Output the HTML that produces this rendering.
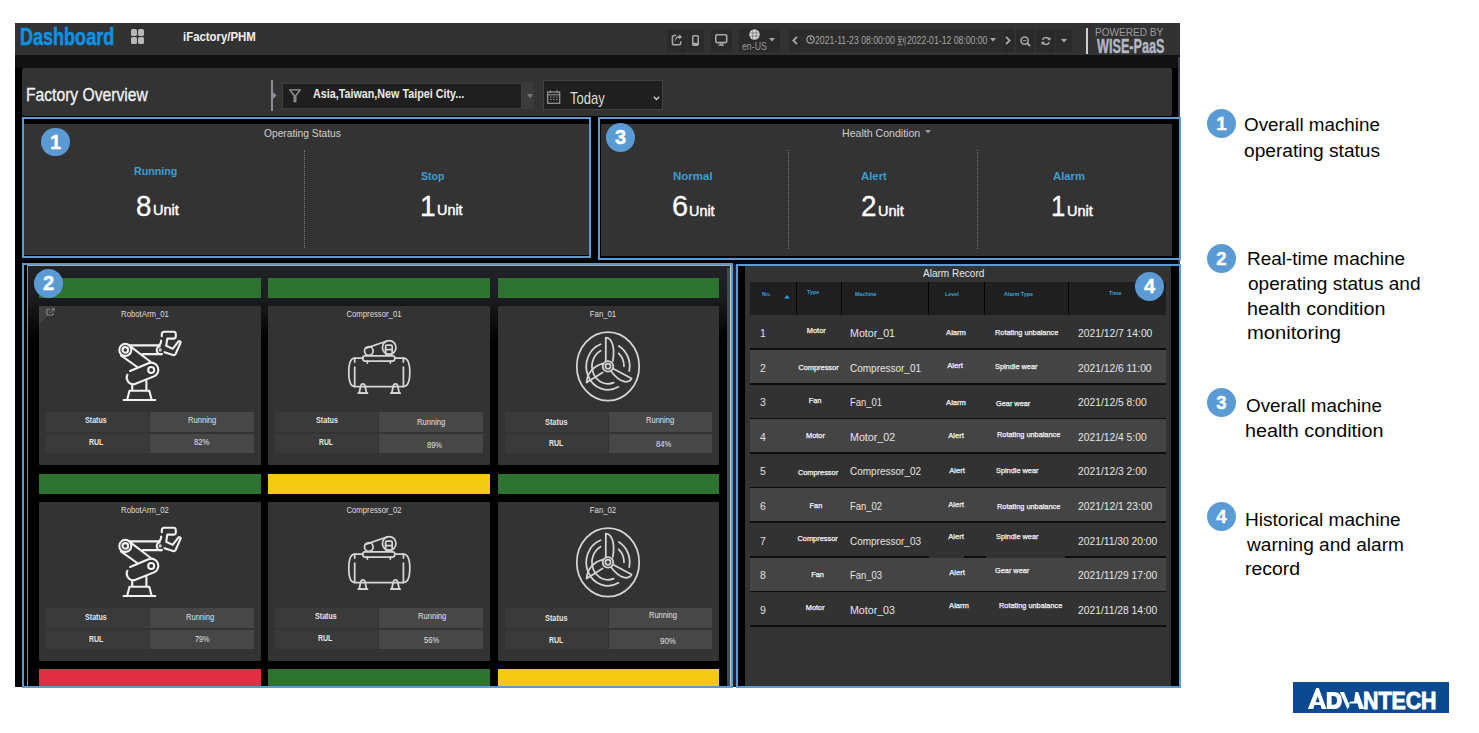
<!DOCTYPE html><html><head><meta charset="utf-8"><style>
html,body{margin:0;padding:0;background:#fff;width:1479px;height:733px;overflow:hidden;position:relative;font-family:"Liberation Sans",sans-serif}
.t{position:absolute;white-space:nowrap}
.badge{position:absolute;border-radius:50%;background:#5b9bd5;color:#fff;text-align:center;font-weight:700}
.badge span{display:block;-webkit-text-stroke:0.4px #fff}
svg{position:absolute;overflow:visible}
</style></head><body>
<div style="position:absolute;left:15px;top:23px;width:1165px;height:664px;background:#000;"></div>
<div style="position:absolute;left:15px;top:23px;width:1165px;height:32px;background:#323232;"></div>
<div style="position:absolute;left:15px;top:55px;width:1165px;height:13px;background:#111112;"></div>
<div style="position:absolute;left:1178px;top:57px;width:2px;height:61px;background:#3c3e58;"></div>
<div style="position:absolute;left:1178px;top:259px;width:2px;height:6px;background:#3c3e58;"></div>
<div class="t" style="left:19.73px;top:25.00px;font-size:24px;line-height:24px;font-weight:700;color:#0b92e2;transform:scaleX(0.7515);transform-origin:0 0;-webkit-text-stroke:0.6px #0b92e2;">Dashboard</div>
<div style="position:absolute;left:131px;top:29.2px;width:6.4px;height:6.9px;background:#b8b8b8;border-radius:1.6px"></div>
<div style="position:absolute;left:138.1px;top:29.2px;width:6.4px;height:6.9px;background:#b8b8b8;border-radius:1.6px"></div>
<div style="position:absolute;left:131px;top:37px;width:6.4px;height:6.9px;background:#b8b8b8;border-radius:1.6px"></div>
<div style="position:absolute;left:138.1px;top:37px;width:6.4px;height:6.9px;background:#b8b8b8;border-radius:1.6px"></div>
<div class="t" style="left:182.90px;top:31.00px;font-size:12.2px;line-height:12.2px;font-weight:700;color:#f2f2f2;transform:scaleX(0.9351);transform-origin:0 0;">iFactory/PHM</div>
<div style="position:absolute;left:667px;top:29px;width:20px;height:23px;background:#2a2a2a;"></div>
<div style="position:absolute;left:688px;top:29px;width:15.5px;height:23px;background:#2a2a2a;"></div>
<div style="position:absolute;left:711px;top:29px;width:21px;height:23px;background:#2a2a2a;"></div>
<div style="position:absolute;left:739px;top:29px;width:41px;height:23px;background:#2a2a2a;"></div>
<div style="position:absolute;left:789px;top:29px;width:12px;height:23px;background:#2a2a2a;"></div>
<div style="position:absolute;left:801px;top:29px;width:201px;height:23px;background:#2c2c2c;"></div>
<div style="position:absolute;left:1003px;top:29px;width:11px;height:23px;background:#2a2a2a;"></div>
<div style="position:absolute;left:1016px;top:29px;width:18px;height:23px;background:#2a2a2a;"></div>
<div style="position:absolute;left:1036px;top:29px;width:19px;height:23px;background:#2a2a2a;"></div>
<div style="position:absolute;left:1055.5px;top:29px;width:16px;height:23px;background:#2a2a2a;"></div>
<svg style="left:671px;top:34px" width="12" height="12" viewBox="0 0 12 12"><path d="M5.2 1.6H3.2Q1.4 1.6 1.4 3.4V8.9Q1.4 10.7 3.2 10.7H7.9Q9.7 10.7 9.7 8.9V7.2" fill="none" stroke="#a8a8a8" stroke-width="1.5"/><path d="M3.8 9C4 5.5 6 3.8 8.2 3.8V5.6L11 2.9L8.2 0.2V2C5.5 2 3.6 4.5 3.8 9Z" fill="#a8a8a8"/></svg>
<svg style="left:692px;top:34.5px" width="7" height="11" viewBox="0 0 7 11"><rect x="0.75" y="0.75" width="5.5" height="9.5" rx="1" fill="none" stroke="#a8a8a8" stroke-width="1.5"/><rect x="0.75" y="7.8" width="5.5" height="2.4" fill="#a8a8a8"/></svg>
<svg style="left:715px;top:34px" width="12.5" height="12" viewBox="0 0 12.5 12"><rect x="0.8" y="0.8" width="10.9" height="7.8" rx="1" fill="none" stroke="#a8a8a8" stroke-width="1.6"/><rect x="4.5" y="9.5" width="3.5" height="1.3" fill="#a8a8a8"/><rect x="3.5" y="10.6" width="5.5" height="1.2" fill="#a8a8a8"/></svg>
<svg style="left:749px;top:29px" width="11" height="11" viewBox="0 0 11 11"><circle cx="5.5" cy="5.5" r="5.2" fill="#dcdcdc"/><path d="M0.5 4H10.5M0.5 7H10.5M3.8 0.5V10.5M7.2 0.5V10.5" stroke="#555" stroke-width="0.6"/></svg>
<div class="t" style="left:741.55px;top:41.00px;font-size:10.6px;line-height:10.6px;font-weight:400;color:#9a9a9a;transform:scaleX(0.8268);transform-origin:0 0;">en-US</div>
<svg style="left:769px;top:38px" width="6" height="4" viewBox="0 0 6 4"><path d="M0 0H6L3 3.5Z" fill="#a8a8a8"/></svg>
<svg style="left:792px;top:36px" width="6" height="9" viewBox="0 0 6 9"><path d="M5 0.8L1.3 4.5L5 8.2" fill="none" stroke="#a8a8a8" stroke-width="1.8"/></svg>
<svg style="left:805.5px;top:35px" width="9" height="9" viewBox="0 0 9 9"><circle cx="4.5" cy="4.5" r="3.7" fill="none" stroke="#a8a8a8" stroke-width="1.2"/><path d="M4.5 2.3V4.8H6" fill="none" stroke="#a8a8a8" stroke-width="1"/></svg>
<div class="t" style="left:815.37px;top:35.00px;font-size:11.3px;line-height:11.3px;font-weight:400;color:#a5a5a5;transform:scaleX(0.7681);transform-origin:0 0;">2021-11-23 08:00:00</div>
<div class="t" style="left:907.17px;top:35.00px;font-size:11.3px;line-height:11.3px;font-weight:400;color:#a5a5a5;transform:scaleX(0.7657);transform-origin:0 0;">2022-01-12 08:00:00</div>
<svg style="left:896.9px;top:35.6px" width="9" height="10" viewBox="0 0 9 10"><g fill="none" stroke="#a0a0a0" stroke-width="0.8"><path d="M0.5 0.7H5.4M3 0.9L1.1 3.6L5.2 3.3M4.1 2.3L5.2 3.4M1 5.6H4.8M2.9 3.9V8.7M0.2 8.8H5.6M6.4 1.6V6.6M8.1 0.4V8.8Q8.1 9.4 7.3 9.3"/></g></svg>
<svg style="left:990px;top:38px" width="6" height="4" viewBox="0 0 6 4"><path d="M0 0H6L3 3.5Z" fill="#a8a8a8"/></svg>
<svg style="left:1005px;top:36px" width="6" height="9" viewBox="0 0 6 9"><path d="M1 0.8L4.7 4.5L1 8.2" fill="none" stroke="#a8a8a8" stroke-width="1.8"/></svg>
<svg style="left:1020px;top:36px" width="11" height="11" viewBox="0 0 11 11"><circle cx="4.6" cy="4.6" r="3.6" fill="none" stroke="#a8a8a8" stroke-width="1.6"/><path d="M7.2 7.2L10.2 10.2" stroke="#a8a8a8" stroke-width="1.8"/><path d="M3 4.6H6.2" stroke="#a8a8a8" stroke-width="1"/></svg>
<svg style="left:1040.5px;top:35.5px" width="10" height="10" viewBox="0 0 10 10"><path d="M8.3 3.5A3.8 3.8 0 0 0 1.5 3.8M1.7 6.5A3.8 3.8 0 0 0 8.5 6.2" fill="none" stroke="#a8a8a8" stroke-width="1.6"/><path d="M9.5 0.8V4.2H6.2Z" fill="#a8a8a8"/><path d="M0.5 9.2V5.8H3.8Z" fill="#a8a8a8"/></svg>
<svg style="left:1060.5px;top:39px" width="6" height="4" viewBox="0 0 6 4"><path d="M0 0H6L3 3.5Z" fill="#a8a8a8"/></svg>
<div style="position:absolute;left:1086px;top:28px;width:2.2px;height:25.5px;background:#cfcfcf;"></div>
<div class="t" style="left:1095.19px;top:27.00px;font-size:11.5px;line-height:11.5px;font-weight:400;color:#9c9c9c;transform:scaleX(0.8754);transform-origin:0 0;">POWERED BY</div>
<div class="t" style="left:1096.60px;top:37.00px;font-size:19.6px;line-height:19.6px;font-weight:700;color:#b3b7c6;transform:scaleX(0.6459);transform-origin:0 0;-webkit-text-stroke:0.4px #b3b7c6;">WISE-PaaS</div>
<div style="position:absolute;left:22px;top:68px;width:1149.5px;height:47.7px;background:#333;border-radius:2px"></div>
<div class="t" style="left:26.25px;top:86.00px;font-size:18.6px;line-height:18.6px;font-weight:400;color:#f5f5f5;transform:scaleX(0.8414);transform-origin:0 0;-webkit-text-stroke:0.3px #f5f5f5;">Factory Overview</div>
<div style="position:absolute;left:271px;top:80px;width:1.5px;height:31px;background:#8a8e96;"></div>
<svg style="left:272px;top:91px" width="5" height="9" viewBox="0 0 5 9"><path d="M0 0L4.5 4.5L0 9Z" fill="#8a8e96"/></svg>
<div style="position:absolute;left:281.5px;top:82.5px;width:240.5px;height:26.5px;background:#1f1f1f;box-sizing:border-box;border:1px solid #3e3e3e"></div>
<div style="position:absolute;left:521.8px;top:82px;width:12.6px;height:27.4px;background:#3b3b3b;"></div>
<svg style="left:526.5px;top:94px" width="6" height="5" viewBox="0 0 6 5"><path d="M0 0H6L3 4.5Z" fill="#777"/></svg>
<svg style="left:289px;top:88.5px" width="12" height="13" viewBox="0 0 12 13"><path d="M0.7 0.8H11.3L6.8 6.5V12.5H5.2V6.5Z" fill="none" stroke="#9a9a9a" stroke-width="1.3" stroke-linejoin="round"/></svg>
<div class="t" style="left:312.53px;top:88.00px;font-size:12px;line-height:12px;font-weight:700;color:#ececec;transform:scaleX(0.8963);transform-origin:0 0;">Asia,Taiwan,New Taipei City...</div>
<div style="position:absolute;left:542.6px;top:80px;width:120px;height:30px;background:#1f1f1f;box-sizing:border-box;border:1px solid #424242"></div>
<svg style="left:547px;top:90px" width="13.5" height="14" viewBox="0 0 13.5 14"><rect x="0.7" y="2" width="12" height="11.3" fill="none" stroke="#9a9a9a" stroke-width="1.2"/><path d="M0.7 4.8H12.7" stroke="#9a9a9a" stroke-width="1"/><path d="M3.5 0.5V3M10 0.5V3" stroke="#9a9a9a" stroke-width="1.2"/><path d="M3 7H4.5M6 7H7.5M9 7H10.5M3 9.5H4.5M6 9.5H7.5M9 9.5H10.5" stroke="#9a9a9a" stroke-width="1.2"/></svg>
<div class="t" style="left:569.54px;top:90.00px;font-size:16.2px;line-height:16.2px;font-weight:400;color:#dedede;transform:scaleX(0.8036);transform-origin:0 0;">Today</div>
<svg style="left:652.5px;top:95.5px" width="7" height="5" viewBox="0 0 7 5"><path d="M0.8 0.8L3.5 3.5L6.2 0.8" fill="none" stroke="#cfcfcf" stroke-width="1.4"/></svg>
<div style="position:absolute;left:24px;top:123.5px;width:565px;height:131.5px;background:#333;"></div>
<div style="position:absolute;left:22px;top:117px;width:569px;height:141px;box-sizing:border-box;border:2px solid #5b9bd5"></div>
<div class="t" style="left:263.94px;top:128.00px;font-size:11.5px;line-height:11.5px;font-weight:400;color:#d0d0d0;transform:scaleX(0.8912);transform-origin:0 0;">Operating Status</div>
<div style="position:absolute;left:304px;top:150px;width:0;height:98px;border-left:1px dotted #777"></div>
<div class="t" style="left:134.10px;top:166.00px;font-size:11.5px;line-height:11.5px;font-weight:700;color:#38a0d2;transform:scaleX(0.9305);transform-origin:0 0;">Running</div>
<div class="t" style="left:136.15px;top:191.00px;font-size:30.2px;line-height:30.2px;font-weight:400;color:#fff;transform:scaleX(0.9229);transform-origin:0 0;-webkit-text-stroke:0.3px #fff;">8</div>
<div class="t" style="left:152.51px;top:203.00px;font-size:14.5px;line-height:14.5px;font-weight:400;color:#fff;transform:scaleX(1.0009);transform-origin:0 0;-webkit-text-stroke:0.45px #fff;">Unit</div>
<div class="t" style="left:421.38px;top:171.00px;font-size:11.8px;line-height:11.8px;font-weight:700;color:#38a0d2;transform:scaleX(0.8948);transform-origin:0 0;">Stop</div>
<div class="t" style="left:419.58px;top:191.00px;font-size:30.2px;line-height:30.2px;font-weight:400;color:#fff;transform:scaleX(0.9363);transform-origin:0 0;-webkit-text-stroke:0.3px #fff;">1</div>
<div class="t" style="left:436.92px;top:203.00px;font-size:14.5px;line-height:14.5px;font-weight:400;color:#fff;transform:scaleX(0.9928);transform-origin:0 0;-webkit-text-stroke:0.45px #fff;">Unit</div>
<div class="badge" style="left:41.1px;top:127.5px;width:28.8px;height:28.8px;"><span style="font-size:20px;line-height:28.8px">1</span></div>
<div style="position:absolute;left:600.5px;top:123.5px;width:571px;height:132.3px;background:#333;"></div>
<div style="position:absolute;left:598px;top:117px;width:583px;height:143px;box-sizing:border-box;border:2px solid #5b9bd5"></div>
<div class="t" style="left:841.55px;top:127.00px;font-size:11.6px;line-height:11.6px;font-weight:400;color:#d0d0d0;transform:scaleX(0.9120);transform-origin:0 0;">Health Condition</div>
<svg style="left:924.5px;top:130px" width="6" height="4" viewBox="0 0 6 4"><path d="M0 0H6L3 3.5Z" fill="#999"/></svg>
<div style="position:absolute;left:788px;top:150px;width:0;height:99px;border-left:1px dotted #777"></div>
<div style="position:absolute;left:977px;top:150px;width:0;height:99px;border-left:1px dotted #777"></div>
<div class="t" style="left:673.25px;top:171.00px;font-size:11.3px;line-height:11.3px;font-weight:700;color:#38a0d2;transform:scaleX(1.0198);transform-origin:0 0;">Normal</div>
<div class="t" style="left:671.55px;top:191.00px;font-size:30.2px;line-height:30.2px;font-weight:400;color:#fff;transform:scaleX(0.9613);transform-origin:0 0;-webkit-text-stroke:0.3px #fff;">6</div>
<div class="t" style="left:688.92px;top:204.00px;font-size:14.5px;line-height:14.5px;font-weight:400;color:#fff;transform:scaleX(0.9928);transform-origin:0 0;-webkit-text-stroke:0.45px #fff;">Unit</div>
<div class="t" style="left:861.12px;top:171.00px;font-size:11.3px;line-height:11.3px;font-weight:700;color:#38a0d2;transform:scaleX(1.0035);transform-origin:0 0;">Alert</div>
<div class="t" style="left:861.00px;top:191.00px;font-size:30.2px;line-height:30.2px;font-weight:400;color:#fff;transform:scaleX(0.9242);transform-origin:0 0;-webkit-text-stroke:0.3px #fff;">2</div>
<div class="t" style="left:878.11px;top:204.00px;font-size:14.5px;line-height:14.5px;font-weight:400;color:#fff;transform:scaleX(1.0009);transform-origin:0 0;-webkit-text-stroke:0.45px #fff;">Unit</div>
<div class="t" style="left:1052.72px;top:171.00px;font-size:11.3px;line-height:11.3px;font-weight:700;color:#38a0d2;transform:scaleX(0.9976);transform-origin:0 0;">Alarm</div>
<div class="t" style="left:1050.77px;top:191.00px;font-size:30.2px;line-height:30.2px;font-weight:400;color:#fff;transform:scaleX(0.8526);transform-origin:0 0;-webkit-text-stroke:0.3px #fff;">1</div>
<div class="t" style="left:1066.91px;top:204.00px;font-size:14.5px;line-height:14.5px;font-weight:400;color:#fff;transform:scaleX(1.0009);transform-origin:0 0;-webkit-text-stroke:0.45px #fff;">Unit</div>
<div class="badge" style="left:606.0px;top:123.0px;width:29px;height:29px;"><span style="font-size:20px;line-height:29px">3</span></div>
<div style="position:absolute;left:27px;top:265.5px;width:704px;height:421px;background:linear-gradient(#222326 0px,#1c1d20 30px,#000 75px);"></div>
<div style="position:absolute;left:27px;top:265.5px;width:1px;height:421px;background:#8c8c8c;"></div>
<div style="position:absolute;left:27px;top:265px;width:704px;height:1px;background:#a8a8a8;"></div>
<div style="position:absolute;left:733.2px;top:265px;width:2.8px;height:422px;background:#25221f;"></div>
<div style="position:absolute;left:730px;top:265.5px;width:1px;height:421px;background:#c8c8c8;"></div>
<div style="position:absolute;left:726.5px;top:268px;width:3px;height:418px;background:#44465a;"></div>
<div style="position:absolute;left:39px;top:278.0px;width:221.5px;height:20px;background:#2e7230;"></div>
<div style="position:absolute;left:268px;top:278.0px;width:221.5px;height:20px;background:#2e7230;"></div>
<div style="position:absolute;left:497.7px;top:278.0px;width:221.5px;height:20px;background:#2e7230;"></div>
<div style="position:absolute;left:39px;top:473.6px;width:221.5px;height:20px;background:#2e7230;"></div>
<div style="position:absolute;left:268px;top:473.6px;width:221.5px;height:20px;background:#f3c911;"></div>
<div style="position:absolute;left:497.7px;top:473.6px;width:221.5px;height:20px;background:#2e7230;"></div>
<div style="position:absolute;left:39px;top:669.2px;width:221.5px;height:17.799999999999955px;background:#e02e45;"></div>
<div style="position:absolute;left:268px;top:669.2px;width:221.5px;height:17.799999999999955px;background:#2e7230;"></div>
<div style="position:absolute;left:497.7px;top:669.2px;width:221.5px;height:17.799999999999955px;background:#f3c911;"></div>
<div style="position:absolute;left:39px;top:306.0px;width:221.5px;height:159.3px;background:#333;border-radius:1px"></div>
<div class="t" style="left:144.75px;top:309.00px;font-size:9.8px;line-height:9.8px;font-weight:400;color:#dedede;transform:translateX(-50%) scaleX(0.7900);transform-origin:50% 0;">RobotArm_01</div>
<div style="position:absolute;left:46px;top:411.9px;width:103.4px;height:20.2px;background:#3a3a3a;"></div>
<div style="position:absolute;left:150.4px;top:411.9px;width:103.2px;height:20.2px;background:#474747;"></div>
<div style="position:absolute;left:46px;top:434.0px;width:103.4px;height:19.3px;background:#3a3a3a;"></div>
<div style="position:absolute;left:150.4px;top:434.0px;width:103.2px;height:19.3px;background:#474747;"></div>
<div class="t" style="left:84.69px;top:416.00px;font-size:8.3px;line-height:8.3px;font-weight:700;color:#e6e6e6;transform:scaleX(0.8597);transform-origin:0 0;">Status</div>
<div class="t" style="left:188.19px;top:416.00px;font-size:8.3px;line-height:8.3px;font-weight:400;color:#e2e2e2;transform:scaleX(0.9154);transform-origin:0 0;">Running</div>
<div class="t" style="left:88.65px;top:438.00px;font-size:8.3px;line-height:8.3px;font-weight:700;color:#e6e6e6;transform:scaleX(0.8421);transform-origin:0 0;">RUL</div>
<div class="t" style="left:193.65px;top:438.00px;font-size:8.3px;line-height:8.3px;font-weight:400;color:#e2e2e2;transform:scaleX(0.9287);transform-origin:0 0;">82%</div>
<svg style="left:117.6px;top:331.0px" width="64" height="71" viewBox="0 0 64 71"><g fill="none" stroke="#f2f2f2" stroke-width="2.1" stroke-linecap="round" stroke-linejoin="round">
<circle cx="7.3" cy="18.9" r="6"/><circle cx="7.3" cy="18.9" r="2.8"/>
<path d="M11.7 14.4H41.1M24.7 23.1H43.8"/>
<path d="M41.8 15.2A3.8 3.8 0 0 0 43.8 23.1"/>
<path d="M43.8 5.2V3.2Q43.8 0.8 46.2 0.8H55.4Q57.8 0.8 57.8 3.2V5.3Q57.8 7.6 55.5 7.6H49.3L48.2 14.8L54.7 17.9L60.3 10.6Q61.6 9.5 62.8 11.2L57.6 23Q56.6 24.6 55 24.1L46.5 21.2"/>
<path d="M43.2 9.5Q43.2 12.5 41.1 14.4"/>
<circle cx="42.2" cy="18.9" r="0.5" fill="#f2f2f2"/>
<path d="M11.7 14.8L32.2 30.5M2.9 24.3L19.2 36"/>
<path d="M12.1 40L30.5 32.2A6.7 6.7 0 0 1 35.9 45.4L16.3 53.2"/>
<path d="M9.3 43.8A6.7 6.7 0 0 0 16.3 53.2"/>
<circle cx="33.2" cy="39" r="3"/>
<path d="M14.2 54.5V59.7M28.4 50V59.7M11.5 59.7H31.3M11.5 59.7L9.1 69M31.3 59.7L33.7 69"/>
<path d="M5.6 69H37.3"/>
</g></svg>
<div style="position:absolute;left:268px;top:306.0px;width:221.5px;height:159.3px;background:#333;border-radius:1px"></div>
<div class="t" style="left:373.75px;top:309.00px;font-size:9.8px;line-height:9.8px;font-weight:400;color:#dedede;transform:translateX(-50%) scaleX(0.7900);transform-origin:50% 0;">Compressor_01</div>
<div style="position:absolute;left:275px;top:411.9px;width:103.4px;height:20.2px;background:#3a3a3a;"></div>
<div style="position:absolute;left:379.4px;top:411.9px;width:103.2px;height:20.2px;background:#474747;"></div>
<div style="position:absolute;left:275px;top:434.0px;width:103.4px;height:19.3px;background:#3a3a3a;"></div>
<div style="position:absolute;left:379.4px;top:434.0px;width:103.2px;height:19.3px;background:#474747;"></div>
<div class="t" style="left:315.58px;top:416.00px;font-size:8.3px;line-height:8.3px;font-weight:700;color:#e6e6e6;transform:scaleX(0.8638);transform-origin:0 0;">Status</div>
<div class="t" style="left:416.99px;top:418.00px;font-size:8.3px;line-height:8.3px;font-weight:400;color:#e2e2e2;transform:scaleX(0.9154);transform-origin:0 0;">Running</div>
<div class="t" style="left:319.36px;top:438.00px;font-size:8.3px;line-height:8.3px;font-weight:700;color:#e6e6e6;transform:scaleX(0.8237);transform-origin:0 0;">RUL</div>
<div class="t" style="left:427.06px;top:441.00px;font-size:8.3px;line-height:8.3px;font-weight:400;color:#e2e2e2;transform:scaleX(0.9036);transform-origin:0 0;">89%</div>
<svg style="left:347.6px;top:330.0px" width="64" height="66" viewBox="0 0 64 66"><g fill="none" stroke="#d6d6d6" stroke-width="1.75" stroke-linecap="round" stroke-linejoin="round">
<path d="M14.8 28H6.7Q0.8 28 0.8 42.3Q0.8 56.5 6.7 56.5H55.4Q61.8 56.5 61.8 42.3Q61.8 28 55.4 28H46.8"/>
<path d="M6.7 28V32M6.7 37V56.5M55.4 28V32M55.4 37V56.5"/>
<rect x="14.8" y="25.8" width="32" height="5.2" rx="2.2"/>
<path d="M19.4 31V33M42.4 31V33"/>
<circle cx="20.8" cy="21" r="4.3"/>
<circle cx="41.2" cy="17.5" r="6.8"/>
<path d="M17.5 18.3L39 11"/>
<rect x="37.6" y="15.2" width="6.6" height="9.2" rx="1.2"/>
<path d="M37.6 19.6H44.2"/>
<path d="M11.2 63L12.8 55.5A2.2 2.2 0 0 1 17 55.5L18.5 63ZM43.8 63L45.4 55.5A2.2 2.2 0 0 1 49.6 55.5L51.2 63Z"/>
<path d="M10.2 63.2H19.5M42.8 63.2H52.2"/>
</g></svg>
<div style="position:absolute;left:497.7px;top:306.0px;width:221.5px;height:159.3px;background:#333;border-radius:1px"></div>
<div class="t" style="left:603.45px;top:309.00px;font-size:9.8px;line-height:9.8px;font-weight:400;color:#dedede;transform:translateX(-50%) scaleX(0.7900);transform-origin:50% 0;">Fan_01</div>
<div style="position:absolute;left:504.7px;top:411.9px;width:103.4px;height:20.2px;background:#3a3a3a;"></div>
<div style="position:absolute;left:609.1px;top:411.9px;width:103.2px;height:20.2px;background:#474747;"></div>
<div style="position:absolute;left:504.7px;top:434.0px;width:103.4px;height:19.3px;background:#3a3a3a;"></div>
<div style="position:absolute;left:609.1px;top:434.0px;width:103.2px;height:19.3px;background:#474747;"></div>
<div class="t" style="left:544.68px;top:418.00px;font-size:8.3px;line-height:8.3px;font-weight:700;color:#e6e6e6;transform:scaleX(0.8880);transform-origin:0 0;">Status</div>
<div class="t" style="left:646.40px;top:416.00px;font-size:8.3px;line-height:8.3px;font-weight:400;color:#e2e2e2;transform:scaleX(0.9087);transform-origin:0 0;">Running</div>
<div class="t" style="left:548.65px;top:439.00px;font-size:8.3px;line-height:8.3px;font-weight:700;color:#e6e6e6;transform:scaleX(0.8421);transform-origin:0 0;">RUL</div>
<div class="t" style="left:656.16px;top:440.00px;font-size:8.3px;line-height:8.3px;font-weight:400;color:#e2e2e2;transform:scaleX(0.9162);transform-origin:0 0;">84%</div>
<svg style="left:576.4px;top:331.0px" width="64" height="71" viewBox="0 0 64 71"><g fill="none" stroke="#d6d6d6" stroke-width="1.75" stroke-linecap="round" stroke-linejoin="round">
<ellipse cx="32" cy="35.4" rx="31.2" ry="34.3"/>
<circle cx="32" cy="35.3" r="5.3"/><circle cx="32" cy="35.3" r="2.6"/>
<path d="M29.8 29.8V6.5C35 7 39.5 14 36.8 30"/>
<path d="M37.8 38L55.6 47.5C53 53 44 52 35.5 40.8"/>
<path d="M26.6 41.5L10.6 51.6C11 43 17 35 26.8 32.6"/>
<path d="M24.58 13.22A21.7 23.5 0 1 0 42.52 55.85"/>
<path d="M24.61 19.78A16 17.5 0 0 0 37.73 51.64"/>
<path d="M42.85 14.95A21.7 23.5 0 0 1 53.24 40.11"/>
<path d="M42.71 22.29A16 17.5 0 0 1 48.00 35.30"/>
</g></svg>
<div style="position:absolute;left:39px;top:501.8px;width:221.5px;height:159.3px;background:#333;border-radius:1px"></div>
<div class="t" style="left:144.75px;top:505.00px;font-size:9.8px;line-height:9.8px;font-weight:400;color:#dedede;transform:translateX(-50%) scaleX(0.7900);transform-origin:50% 0;">RobotArm_02</div>
<div style="position:absolute;left:46px;top:607.7px;width:103.4px;height:20.2px;background:#3a3a3a;"></div>
<div style="position:absolute;left:150.4px;top:607.7px;width:103.2px;height:20.2px;background:#474747;"></div>
<div style="position:absolute;left:46px;top:629.8px;width:103.4px;height:19.3px;background:#3a3a3a;"></div>
<div style="position:absolute;left:150.4px;top:629.8px;width:103.2px;height:19.3px;background:#474747;"></div>
<div class="t" style="left:84.69px;top:613.00px;font-size:8.3px;line-height:8.3px;font-weight:700;color:#e6e6e6;transform:scaleX(0.8597);transform-origin:0 0;">Status</div>
<div class="t" style="left:186.40px;top:613.00px;font-size:8.3px;line-height:8.3px;font-weight:400;color:#e2e2e2;transform:scaleX(0.9087);transform-origin:0 0;">Running</div>
<div class="t" style="left:88.65px;top:635.00px;font-size:8.3px;line-height:8.3px;font-weight:700;color:#e6e6e6;transform:scaleX(0.8421);transform-origin:0 0;">RUL</div>
<div class="t" style="left:195.04px;top:635.00px;font-size:8.3px;line-height:8.3px;font-weight:400;color:#e2e2e2;transform:scaleX(0.8745);transform-origin:0 0;">79%</div>
<svg style="left:117.6px;top:526.8px" width="64" height="71" viewBox="0 0 64 71"><g fill="none" stroke="#f2f2f2" stroke-width="2.1" stroke-linecap="round" stroke-linejoin="round">
<circle cx="7.3" cy="18.9" r="6"/><circle cx="7.3" cy="18.9" r="2.8"/>
<path d="M11.7 14.4H41.1M24.7 23.1H43.8"/>
<path d="M41.8 15.2A3.8 3.8 0 0 0 43.8 23.1"/>
<path d="M43.8 5.2V3.2Q43.8 0.8 46.2 0.8H55.4Q57.8 0.8 57.8 3.2V5.3Q57.8 7.6 55.5 7.6H49.3L48.2 14.8L54.7 17.9L60.3 10.6Q61.6 9.5 62.8 11.2L57.6 23Q56.6 24.6 55 24.1L46.5 21.2"/>
<path d="M43.2 9.5Q43.2 12.5 41.1 14.4"/>
<circle cx="42.2" cy="18.9" r="0.5" fill="#f2f2f2"/>
<path d="M11.7 14.8L32.2 30.5M2.9 24.3L19.2 36"/>
<path d="M12.1 40L30.5 32.2A6.7 6.7 0 0 1 35.9 45.4L16.3 53.2"/>
<path d="M9.3 43.8A6.7 6.7 0 0 0 16.3 53.2"/>
<circle cx="33.2" cy="39" r="3"/>
<path d="M14.2 54.5V59.7M28.4 50V59.7M11.5 59.7H31.3M11.5 59.7L9.1 69M31.3 59.7L33.7 69"/>
<path d="M5.6 69H37.3"/>
</g></svg>
<div style="position:absolute;left:268px;top:501.8px;width:221.5px;height:159.3px;background:#333;border-radius:1px"></div>
<div class="t" style="left:373.75px;top:505.00px;font-size:9.8px;line-height:9.8px;font-weight:400;color:#dedede;transform:translateX(-50%) scaleX(0.7900);transform-origin:50% 0;">Compressor_02</div>
<div style="position:absolute;left:275px;top:607.7px;width:103.4px;height:20.2px;background:#3a3a3a;"></div>
<div style="position:absolute;left:379.4px;top:607.7px;width:103.2px;height:20.2px;background:#474747;"></div>
<div style="position:absolute;left:275px;top:629.8px;width:103.4px;height:19.3px;background:#3a3a3a;"></div>
<div style="position:absolute;left:379.4px;top:629.8px;width:103.2px;height:19.3px;background:#474747;"></div>
<div class="t" style="left:314.69px;top:612.00px;font-size:8.3px;line-height:8.3px;font-weight:700;color:#e6e6e6;transform:scaleX(0.8597);transform-origin:0 0;">Status</div>
<div class="t" style="left:418.19px;top:612.00px;font-size:8.3px;line-height:8.3px;font-weight:400;color:#e2e2e2;transform:scaleX(0.9154);transform-origin:0 0;">Running</div>
<div class="t" style="left:318.35px;top:634.00px;font-size:8.3px;line-height:8.3px;font-weight:700;color:#e6e6e6;transform:scaleX(0.8421);transform-origin:0 0;">RUL</div>
<div class="t" style="left:424.40px;top:636.00px;font-size:8.3px;line-height:8.3px;font-weight:400;color:#e2e2e2;transform:scaleX(0.9138);transform-origin:0 0;">56%</div>
<svg style="left:347.6px;top:525.8px" width="64" height="66" viewBox="0 0 64 66"><g fill="none" stroke="#d6d6d6" stroke-width="1.75" stroke-linecap="round" stroke-linejoin="round">
<path d="M14.8 28H6.7Q0.8 28 0.8 42.3Q0.8 56.5 6.7 56.5H55.4Q61.8 56.5 61.8 42.3Q61.8 28 55.4 28H46.8"/>
<path d="M6.7 28V32M6.7 37V56.5M55.4 28V32M55.4 37V56.5"/>
<rect x="14.8" y="25.8" width="32" height="5.2" rx="2.2"/>
<path d="M19.4 31V33M42.4 31V33"/>
<circle cx="20.8" cy="21" r="4.3"/>
<circle cx="41.2" cy="17.5" r="6.8"/>
<path d="M17.5 18.3L39 11"/>
<rect x="37.6" y="15.2" width="6.6" height="9.2" rx="1.2"/>
<path d="M37.6 19.6H44.2"/>
<path d="M11.2 63L12.8 55.5A2.2 2.2 0 0 1 17 55.5L18.5 63ZM43.8 63L45.4 55.5A2.2 2.2 0 0 1 49.6 55.5L51.2 63Z"/>
<path d="M10.2 63.2H19.5M42.8 63.2H52.2"/>
</g></svg>
<div style="position:absolute;left:497.7px;top:501.8px;width:221.5px;height:159.3px;background:#333;border-radius:1px"></div>
<div class="t" style="left:603.45px;top:505.00px;font-size:9.8px;line-height:9.8px;font-weight:400;color:#dedede;transform:translateX(-50%) scaleX(0.7900);transform-origin:50% 0;">Fan_02</div>
<div style="position:absolute;left:504.7px;top:607.7px;width:103.4px;height:20.2px;background:#3a3a3a;"></div>
<div style="position:absolute;left:609.1px;top:607.7px;width:103.2px;height:20.2px;background:#474747;"></div>
<div style="position:absolute;left:504.7px;top:629.8px;width:103.4px;height:19.3px;background:#3a3a3a;"></div>
<div style="position:absolute;left:609.1px;top:629.8px;width:103.2px;height:19.3px;background:#474747;"></div>
<div class="t" style="left:544.68px;top:614.00px;font-size:8.3px;line-height:8.3px;font-weight:700;color:#e6e6e6;transform:scaleX(0.8880);transform-origin:0 0;">Status</div>
<div class="t" style="left:648.90px;top:611.00px;font-size:8.3px;line-height:8.3px;font-weight:400;color:#e2e2e2;transform:scaleX(0.9019);transform-origin:0 0;">Running</div>
<div class="t" style="left:548.65px;top:636.00px;font-size:8.3px;line-height:8.3px;font-weight:700;color:#e6e6e6;transform:scaleX(0.8421);transform-origin:0 0;">RUL</div>
<div class="t" style="left:659.64px;top:637.00px;font-size:8.3px;line-height:8.3px;font-weight:400;color:#e2e2e2;transform:scaleX(0.9538);transform-origin:0 0;">90%</div>
<svg style="left:576.4px;top:526.8px" width="64" height="71" viewBox="0 0 64 71"><g fill="none" stroke="#d6d6d6" stroke-width="1.75" stroke-linecap="round" stroke-linejoin="round">
<ellipse cx="32" cy="35.4" rx="31.2" ry="34.3"/>
<circle cx="32" cy="35.3" r="5.3"/><circle cx="32" cy="35.3" r="2.6"/>
<path d="M29.8 29.8V6.5C35 7 39.5 14 36.8 30"/>
<path d="M37.8 38L55.6 47.5C53 53 44 52 35.5 40.8"/>
<path d="M26.6 41.5L10.6 51.6C11 43 17 35 26.8 32.6"/>
<path d="M24.58 13.22A21.7 23.5 0 1 0 42.52 55.85"/>
<path d="M24.61 19.78A16 17.5 0 0 0 37.73 51.64"/>
<path d="M42.85 14.95A21.7 23.5 0 0 1 53.24 40.11"/>
<path d="M42.71 22.29A16 17.5 0 0 1 48.00 35.30"/>
</g></svg>
<svg style="left:39px;top:306px" width="20" height="20" viewBox="0 0 20 20"><path d="M0 0H18L0 19Z" fill="#404040"/></svg>
<svg style="left:46px;top:308px" width="9" height="8" viewBox="0 0 9 8"><path d="M4 1.2H1V7H7V4.5" fill="none" stroke="#8a8a8a" stroke-width="1"/><path d="M4.2 4.8L8.2 0.8M5.6 0.8H8.2V3.4" fill="none" stroke="#8a8a8a" stroke-width="1"/></svg>
<div style="position:absolute;left:22px;top:263px;width:711px;height:425px;box-sizing:border-box;border:2px solid #5b9bd5"></div>
<div class="badge" style="left:34.0px;top:269.0px;width:29px;height:29px;"><span style="font-size:20px;line-height:29px">2</span></div>
<div style="position:absolute;left:745px;top:266px;width:426px;height:420px;background:#333;"></div>
<div style="position:absolute;left:736px;top:264px;width:445px;height:424px;box-sizing:border-box;border:2px solid #5b9bd5"></div>
<div class="t" style="left:922.60px;top:268.00px;font-size:11px;line-height:11px;font-weight:400;color:#e8e8e8;transform:scaleX(0.9129);transform-origin:0 0;">Alarm Record</div>
<div style="position:absolute;left:750px;top:282px;width:415.8px;height:33.3px;background:#1f1f1f;"></div>
<div style="position:absolute;left:795.6px;top:282px;width:1.3px;height:33.3px;background:#050505;"></div>
<div style="position:absolute;left:841.0px;top:282px;width:1.3px;height:33.3px;background:#050505;"></div>
<div style="position:absolute;left:928.1px;top:282px;width:1.3px;height:33.3px;background:#050505;"></div>
<div style="position:absolute;left:983.9px;top:282px;width:1.3px;height:33.3px;background:#050505;"></div>
<div style="position:absolute;left:1068.0px;top:282px;width:1.3px;height:33.3px;background:#050505;"></div>
<div class="t" style="left:762.00px;top:291.00px;font-size:6px;line-height:6px;font-weight:700;color:#3aa0d8;transform:scaleX(0.9000);transform-origin:0 0;">No.</div>
<svg style="left:784.3px;top:295px" width="6" height="4" viewBox="0 0 6 4"><path d="M0 3.5H6L3 0Z" fill="#2fa0e8"/></svg>
<div class="t" style="left:807.20px;top:289.00px;font-size:6px;line-height:6px;font-weight:700;color:#3aa0d8;transform:scaleX(0.9000);transform-origin:0 0;">Type</div>
<div class="t" style="left:855.00px;top:291.00px;font-size:6px;line-height:6px;font-weight:700;color:#3aa0d8;transform:scaleX(0.9000);transform-origin:0 0;">Machine</div>
<div class="t" style="left:945.00px;top:291.00px;font-size:6px;line-height:6px;font-weight:700;color:#3aa0d8;transform:scaleX(0.9000);transform-origin:0 0;">Level</div>
<div class="t" style="left:1004.00px;top:291.00px;font-size:6px;line-height:6px;font-weight:700;color:#3aa0d8;transform:scaleX(0.9000);transform-origin:0 0;">Alarm Type</div>
<div class="t" style="left:1109.00px;top:290.00px;font-size:6px;line-height:6px;font-weight:700;color:#3aa0d8;transform:scaleX(0.9000);transform-origin:0 0;">Time</div>
<div style="position:absolute;left:750px;top:315.3px;width:415.8px;height:34.6px;background:#323232;"></div>
<div style="position:absolute;left:750px;top:348.3px;width:415.8px;height:1.7px;background:#0d0d0d;"></div>
<div class="t" style="left:759.90px;top:328.00px;font-size:11px;line-height:11px;font-weight:400;color:#e0e0e0;transform:scaleX(0.9500);transform-origin:0 0;">1</div>
<div class="t" style="left:816.30px;top:327.00px;font-size:7.4px;line-height:7.4px;font-weight:400;color:#f4f4f4;transform:translateX(-50%) scaleX(1.0000);transform-origin:50% 0;-webkit-text-stroke:0.25px #f4f4f4;">Motor</div>
<div class="t" style="left:850.05px;top:328.00px;font-size:11.3px;line-height:11.3px;font-weight:400;color:#e6e6e6;transform:scaleX(0.9432);transform-origin:0 0;">Motor_01</div>
<div class="t" style="left:955.90px;top:329.00px;font-size:7.4px;line-height:7.4px;font-weight:400;color:#f4f4f4;transform:translateX(-50%) scaleX(1.0300);transform-origin:50% 0;-webkit-text-stroke:0.25px #f4f4f4;">Alarm</div>
<div class="t" style="left:994.90px;top:329.00px;font-size:7.7px;line-height:7.7px;font-weight:400;color:#f4f4f4;transform:scaleX(0.9550);transform-origin:0 0;-webkit-text-stroke:0.25px #f4f4f4;">Rotating unbalance</div>
<div class="t" style="left:1078.10px;top:327.00px;font-size:11.6px;line-height:11.6px;font-weight:400;color:#e6e6e6;transform:scaleX(0.8870);transform-origin:0 0;">2021/12/7 14:00</div>
<div style="position:absolute;left:750px;top:349.90000000000003px;width:415.8px;height:34.6px;background:#444;"></div>
<div style="position:absolute;left:750px;top:382.90000000000003px;width:415.8px;height:1.7px;background:#0d0d0d;"></div>
<div class="t" style="left:759.90px;top:363.00px;font-size:11px;line-height:11px;font-weight:400;color:#e0e0e0;transform:scaleX(0.9500);transform-origin:0 0;">2</div>
<div class="t" style="left:818.50px;top:364.00px;font-size:7.4px;line-height:7.4px;font-weight:400;color:#f4f4f4;transform:translateX(-50%) scaleX(1.0000);transform-origin:50% 0;-webkit-text-stroke:0.25px #f4f4f4;">Compressor</div>
<div class="t" style="left:850.40px;top:363.00px;font-size:11.3px;line-height:11.3px;font-weight:400;color:#e6e6e6;transform:scaleX(0.8837);transform-origin:0 0;">Compressor_01</div>
<div class="t" style="left:955.10px;top:362.00px;font-size:7.4px;line-height:7.4px;font-weight:400;color:#f4f4f4;transform:translateX(-50%) scaleX(1.0300);transform-origin:50% 0;-webkit-text-stroke:0.25px #f4f4f4;">Alert</div>
<div class="t" style="left:994.90px;top:363.00px;font-size:7.7px;line-height:7.7px;font-weight:400;color:#f4f4f4;transform:scaleX(0.9550);transform-origin:0 0;-webkit-text-stroke:0.25px #f4f4f4;">Spindle wear</div>
<div class="t" style="left:1078.10px;top:362.00px;font-size:11.6px;line-height:11.6px;font-weight:400;color:#e6e6e6;transform:scaleX(0.8870);transform-origin:0 0;">2021/12/6 11:00</div>
<div style="position:absolute;left:750px;top:384.5px;width:415.8px;height:34.6px;background:#323232;"></div>
<div style="position:absolute;left:750px;top:417.5px;width:415.8px;height:1.7px;background:#0d0d0d;"></div>
<div class="t" style="left:759.90px;top:397.00px;font-size:11px;line-height:11px;font-weight:400;color:#e0e0e0;transform:scaleX(0.9500);transform-origin:0 0;">3</div>
<div class="t" style="left:815.10px;top:397.00px;font-size:7.4px;line-height:7.4px;font-weight:400;color:#f4f4f4;transform:translateX(-50%) scaleX(1.0000);transform-origin:50% 0;-webkit-text-stroke:0.25px #f4f4f4;">Fan</div>
<div class="t" style="left:850.14px;top:397.00px;font-size:11.3px;line-height:11.3px;font-weight:400;color:#e6e6e6;transform:scaleX(0.8375);transform-origin:0 0;">Fan_01</div>
<div class="t" style="left:955.90px;top:399.00px;font-size:7.4px;line-height:7.4px;font-weight:400;color:#f4f4f4;transform:translateX(-50%) scaleX(1.0300);transform-origin:50% 0;-webkit-text-stroke:0.25px #f4f4f4;">Alarm</div>
<div class="t" style="left:995.90px;top:400.00px;font-size:7.7px;line-height:7.7px;font-weight:400;color:#f4f4f4;transform:scaleX(0.9550);transform-origin:0 0;-webkit-text-stroke:0.25px #f4f4f4;">Gear wear</div>
<div class="t" style="left:1078.10px;top:396.00px;font-size:11.6px;line-height:11.6px;font-weight:400;color:#e6e6e6;transform:scaleX(0.8870);transform-origin:0 0;">2021/12/5 8:00</div>
<div style="position:absolute;left:750px;top:419.1px;width:415.8px;height:34.6px;background:#444;"></div>
<div style="position:absolute;left:750px;top:452.1px;width:415.8px;height:1.7px;background:#0d0d0d;"></div>
<div class="t" style="left:759.90px;top:432.00px;font-size:11px;line-height:11px;font-weight:400;color:#e0e0e0;transform:scaleX(0.9500);transform-origin:0 0;">4</div>
<div class="t" style="left:815.50px;top:432.00px;font-size:7.4px;line-height:7.4px;font-weight:400;color:#f4f4f4;transform:translateX(-50%) scaleX(1.0000);transform-origin:50% 0;-webkit-text-stroke:0.25px #f4f4f4;">Motor</div>
<div class="t" style="left:850.05px;top:432.00px;font-size:11.3px;line-height:11.3px;font-weight:400;color:#e6e6e6;transform:scaleX(0.9444);transform-origin:0 0;">Motor_02</div>
<div class="t" style="left:956.10px;top:432.00px;font-size:7.4px;line-height:7.4px;font-weight:400;color:#f4f4f4;transform:translateX(-50%) scaleX(1.0300);transform-origin:50% 0;-webkit-text-stroke:0.25px #f4f4f4;">Alert</div>
<div class="t" style="left:996.80px;top:431.00px;font-size:7.7px;line-height:7.7px;font-weight:400;color:#f4f4f4;transform:scaleX(0.9550);transform-origin:0 0;-webkit-text-stroke:0.25px #f4f4f4;">Rotating unbalance</div>
<div class="t" style="left:1078.10px;top:431.00px;font-size:11.6px;line-height:11.6px;font-weight:400;color:#e6e6e6;transform:scaleX(0.8870);transform-origin:0 0;">2021/12/4 5:00</div>
<div style="position:absolute;left:750px;top:453.70000000000005px;width:415.8px;height:34.6px;background:#323232;"></div>
<div style="position:absolute;left:750px;top:486.70000000000005px;width:415.8px;height:1.7px;background:#0d0d0d;"></div>
<div class="t" style="left:759.90px;top:466.00px;font-size:11px;line-height:11px;font-weight:400;color:#e0e0e0;transform:scaleX(0.9500);transform-origin:0 0;">5</div>
<div class="t" style="left:818.00px;top:469.00px;font-size:7.4px;line-height:7.4px;font-weight:400;color:#f4f4f4;transform:translateX(-50%) scaleX(1.0000);transform-origin:50% 0;-webkit-text-stroke:0.25px #f4f4f4;">Compressor</div>
<div class="t" style="left:850.40px;top:466.00px;font-size:11.3px;line-height:11.3px;font-weight:400;color:#e6e6e6;transform:scaleX(0.8843);transform-origin:0 0;">Compressor_02</div>
<div class="t" style="left:956.70px;top:467.00px;font-size:7.4px;line-height:7.4px;font-weight:400;color:#f4f4f4;transform:translateX(-50%) scaleX(1.0300);transform-origin:50% 0;-webkit-text-stroke:0.25px #f4f4f4;">Alert</div>
<div class="t" style="left:995.90px;top:467.00px;font-size:7.7px;line-height:7.7px;font-weight:400;color:#f4f4f4;transform:scaleX(0.9550);transform-origin:0 0;-webkit-text-stroke:0.25px #f4f4f4;">Spindle wear</div>
<div class="t" style="left:1078.10px;top:465.00px;font-size:11.6px;line-height:11.6px;font-weight:400;color:#e6e6e6;transform:scaleX(0.8870);transform-origin:0 0;">2021/12/3 2:00</div>
<div style="position:absolute;left:750px;top:488.3px;width:415.8px;height:34.6px;background:#444;"></div>
<div style="position:absolute;left:750px;top:521.3px;width:415.8px;height:1.7px;background:#0d0d0d;"></div>
<div class="t" style="left:759.90px;top:501.00px;font-size:11px;line-height:11px;font-weight:400;color:#e0e0e0;transform:scaleX(0.9500);transform-origin:0 0;">6</div>
<div class="t" style="left:815.90px;top:502.00px;font-size:7.4px;line-height:7.4px;font-weight:400;color:#f4f4f4;transform:translateX(-50%) scaleX(1.0000);transform-origin:50% 0;-webkit-text-stroke:0.25px #f4f4f4;">Fan</div>
<div class="t" style="left:850.14px;top:501.00px;font-size:11.3px;line-height:11.3px;font-weight:400;color:#e6e6e6;transform:scaleX(0.8388);transform-origin:0 0;">Fan_02</div>
<div class="t" style="left:956.00px;top:501.00px;font-size:7.4px;line-height:7.4px;font-weight:400;color:#f4f4f4;transform:translateX(-50%) scaleX(1.0300);transform-origin:50% 0;-webkit-text-stroke:0.25px #f4f4f4;">Alert</div>
<div class="t" style="left:997.00px;top:503.00px;font-size:7.7px;line-height:7.7px;font-weight:400;color:#f4f4f4;transform:scaleX(0.9550);transform-origin:0 0;-webkit-text-stroke:0.25px #f4f4f4;">Rotating unbalance</div>
<div class="t" style="left:1078.10px;top:500.00px;font-size:11.6px;line-height:11.6px;font-weight:400;color:#e6e6e6;transform:scaleX(0.8870);transform-origin:0 0;">2021/12/1 23:00</div>
<div style="position:absolute;left:750px;top:522.9000000000001px;width:415.8px;height:34.6px;background:#323232;"></div>
<div style="position:absolute;left:750px;top:555.9000000000001px;width:178.89999999999998px;height:1.7px;background:#0d0d0d;"></div>
<div style="position:absolute;left:964.2px;top:555.9000000000001px;width:21.59999999999991px;height:1.7px;background:#0d0d0d;"></div>
<div style="position:absolute;left:1065.1px;top:555.9000000000001px;width:100.70000000000005px;height:1.7px;background:#0d0d0d;"></div>
<div class="t" style="left:759.90px;top:536.00px;font-size:11px;line-height:11px;font-weight:400;color:#e0e0e0;transform:scaleX(0.9500);transform-origin:0 0;">7</div>
<div class="t" style="left:817.60px;top:535.00px;font-size:7.4px;line-height:7.4px;font-weight:400;color:#f4f4f4;transform:translateX(-50%) scaleX(1.0000);transform-origin:50% 0;-webkit-text-stroke:0.25px #f4f4f4;">Compressor</div>
<div class="t" style="left:850.40px;top:536.00px;font-size:11.3px;line-height:11.3px;font-weight:400;color:#e6e6e6;transform:scaleX(0.8831);transform-origin:0 0;">Compressor_03</div>
<div class="t" style="left:956.00px;top:533.00px;font-size:7.4px;line-height:7.4px;font-weight:400;color:#f4f4f4;transform:translateX(-50%) scaleX(1.0300);transform-origin:50% 0;-webkit-text-stroke:0.25px #f4f4f4;">Alert</div>
<div class="t" style="left:995.90px;top:533.00px;font-size:7.7px;line-height:7.7px;font-weight:400;color:#f4f4f4;transform:scaleX(0.9550);transform-origin:0 0;-webkit-text-stroke:0.25px #f4f4f4;">Spindle wear</div>
<div class="t" style="left:1078.10px;top:535.00px;font-size:11.6px;line-height:11.6px;font-weight:400;color:#e6e6e6;transform:scaleX(0.8870);transform-origin:0 0;">2021/11/30 20:00</div>
<div style="position:absolute;left:750px;top:557.5px;width:415.8px;height:34.6px;background:#444;"></div>
<div style="position:absolute;left:750px;top:590.5px;width:415.8px;height:1.7px;background:#0d0d0d;"></div>
<div class="t" style="left:759.90px;top:570.00px;font-size:11px;line-height:11px;font-weight:400;color:#e0e0e0;transform:scaleX(0.9500);transform-origin:0 0;">8</div>
<div class="t" style="left:817.60px;top:571.00px;font-size:7.4px;line-height:7.4px;font-weight:400;color:#f4f4f4;transform:translateX(-50%) scaleX(1.0000);transform-origin:50% 0;-webkit-text-stroke:0.25px #f4f4f4;">Fan</div>
<div class="t" style="left:850.14px;top:570.00px;font-size:11.3px;line-height:11.3px;font-weight:400;color:#e6e6e6;transform:scaleX(0.8362);transform-origin:0 0;">Fan_03</div>
<div class="t" style="left:956.50px;top:569.00px;font-size:7.4px;line-height:7.4px;font-weight:400;color:#f4f4f4;transform:translateX(-50%) scaleX(1.0300);transform-origin:50% 0;-webkit-text-stroke:0.25px #f4f4f4;">Alert</div>
<div class="t" style="left:995.00px;top:567.00px;font-size:7.7px;line-height:7.7px;font-weight:400;color:#f4f4f4;transform:scaleX(0.9550);transform-origin:0 0;-webkit-text-stroke:0.25px #f4f4f4;">Gear wear</div>
<div class="t" style="left:1078.10px;top:569.00px;font-size:11.6px;line-height:11.6px;font-weight:400;color:#e6e6e6;transform:scaleX(0.8870);transform-origin:0 0;">2021/11/29 17:00</div>
<div style="position:absolute;left:750px;top:592.1px;width:415.8px;height:34.6px;background:#323232;"></div>
<div style="position:absolute;left:750px;top:625.1px;width:415.8px;height:1.7px;background:#0d0d0d;"></div>
<div class="t" style="left:759.90px;top:605.00px;font-size:11px;line-height:11px;font-weight:400;color:#e0e0e0;transform:scaleX(0.9500);transform-origin:0 0;">9</div>
<div class="t" style="left:815.20px;top:604.00px;font-size:7.4px;line-height:7.4px;font-weight:400;color:#f4f4f4;transform:translateX(-50%) scaleX(1.0000);transform-origin:50% 0;-webkit-text-stroke:0.25px #f4f4f4;">Motor</div>
<div class="t" style="left:850.05px;top:605.00px;font-size:11.3px;line-height:11.3px;font-weight:400;color:#e6e6e6;transform:scaleX(0.9421);transform-origin:0 0;">Motor_03</div>
<div class="t" style="left:958.50px;top:602.00px;font-size:7.4px;line-height:7.4px;font-weight:400;color:#f4f4f4;transform:translateX(-50%) scaleX(1.0300);transform-origin:50% 0;-webkit-text-stroke:0.25px #f4f4f4;">Alarm</div>
<div class="t" style="left:998.70px;top:602.00px;font-size:7.7px;line-height:7.7px;font-weight:400;color:#f4f4f4;transform:scaleX(0.9550);transform-origin:0 0;-webkit-text-stroke:0.25px #f4f4f4;">Rotating unbalance</div>
<div class="t" style="left:1078.10px;top:604.00px;font-size:11.6px;line-height:11.6px;font-weight:400;color:#e6e6e6;transform:scaleX(0.8870);transform-origin:0 0;">2021/11/28 14:00</div>
<div class="badge" style="left:1135.0px;top:272.0px;width:29px;height:29px;"><span style="font-size:20px;line-height:29px">4</span></div>
<div class="badge" style="left:1206.9px;top:109.0px;width:29px;height:29px;"><span style="font-size:18.5px;line-height:29px">1</span></div>
<div class="t" style="left:1244.05px;top:116.00px;font-size:18.7px;line-height:18.7px;font-weight:400;color:#050505;transform:scaleX(1.0066);transform-origin:0 0;">Overall machine</div>
<div class="t" style="left:1244.13px;top:142.00px;font-size:18.7px;line-height:18.7px;font-weight:400;color:#050505;transform:scaleX(1.0232);transform-origin:0 0;">operating status</div>
<div class="badge" style="left:1206.9px;top:244.0px;width:29px;height:29px;"><span style="font-size:18.5px;line-height:29px">2</span></div>
<div class="t" style="left:1246.88px;top:250.00px;font-size:18.7px;line-height:18.7px;font-weight:400;color:#050505;transform:scaleX(1.0142);transform-origin:0 0;">Real-time machine</div>
<div class="t" style="left:1247.64px;top:275.00px;font-size:18.7px;line-height:18.7px;font-weight:400;color:#050505;transform:scaleX(1.0188);transform-origin:0 0;">operating status and</div>
<div class="t" style="left:1247.02px;top:300.00px;font-size:18.7px;line-height:18.7px;font-weight:400;color:#050505;transform:scaleX(1.0571);transform-origin:0 0;">health condition</div>
<div class="t" style="left:1247.09px;top:324.00px;font-size:18.7px;line-height:18.7px;font-weight:400;color:#050505;transform:scaleX(1.0778);transform-origin:0 0;">monitoring</div>
<div class="badge" style="left:1206.9px;top:388.0px;width:29px;height:29px;"><span style="font-size:18.5px;line-height:29px">3</span></div>
<div class="t" style="left:1245.85px;top:397.00px;font-size:18.7px;line-height:18.7px;font-weight:400;color:#050505;transform:scaleX(1.0066);transform-origin:0 0;">Overall machine</div>
<div class="t" style="left:1245.32px;top:422.00px;font-size:18.7px;line-height:18.7px;font-weight:400;color:#050505;transform:scaleX(1.0578);transform-origin:0 0;">health condition</div>
<div class="badge" style="left:1206.9px;top:501.8px;width:29px;height:29px;"><span style="font-size:18.5px;line-height:29px">4</span></div>
<div class="t" style="left:1245.18px;top:511.00px;font-size:18.7px;line-height:18.7px;font-weight:400;color:#050505;transform:scaleX(1.0190);transform-origin:0 0;">Historical machine</div>
<div class="t" style="left:1246.70px;top:536.00px;font-size:18.7px;line-height:18.7px;font-weight:400;color:#050505;transform:scaleX(1.0204);transform-origin:0 0;">warning and alarm</div>
<div class="t" style="left:1245.44px;top:560.00px;font-size:18.7px;line-height:18.7px;font-weight:400;color:#050505;transform:scaleX(1.0399);transform-origin:0 0;">record</div>
<div style="position:absolute;left:1293.1px;top:681.9px;width:156.2px;height:31.6px;background:#0b4a91;"></div>
<svg style="left:0;top:0" width="1479" height="733" viewBox="0 0 1479 733"><g fill="#fff" fill-rule="evenodd"><path d="M1307.9 709.1L1316.2 688H1318.8L1326.5 709.1H1321.6L1320.6 705.1H1314.4L1313.2 709.1ZM1315.6 702.2L1317.6 696.2L1319.7 702.2Z"/><path d="M1326.8 691.9H1333.4C1339.4 691.9 1341.8 695.2 1341.8 700.5C1341.8 705.9 1339.4 709.1 1333.4 709.1H1326.8ZM1331.6 696H1333C1336 696 1337 697.6 1337 700.4C1337 703.2 1336 704.8 1333 704.8H1331.6Z"/><path d="M1339.8 691.9H1344L1349.6 705.6L1347.6 709.4Z"/><path d="M1348.4 703.6L1350.6 701.4H1354L1355.4 691.9H1358.2L1364.2 709.1H1359.1L1357.6 703.6Z"/></g></svg>
<div class="t" style="left:1362.61px;top:689.00px;font-size:24.7px;line-height:24.7px;font-weight:700;color:#fff;transform:scaleX(0.8648);transform-origin:0 0;-webkit-text-stroke:0.9px #fff;">NTECH</div>
</body></html>
